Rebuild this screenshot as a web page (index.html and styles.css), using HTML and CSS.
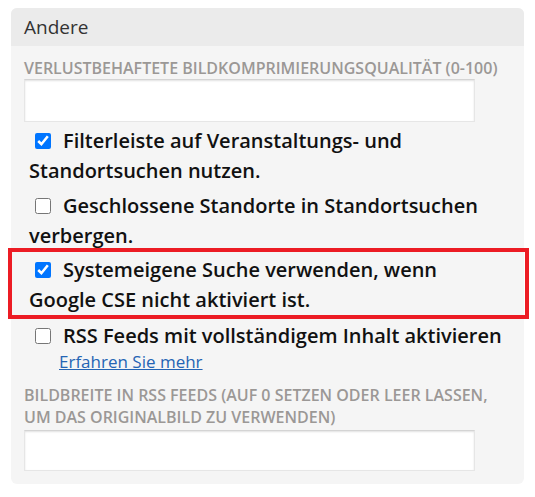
FILE: index.html
```html
<!DOCTYPE html>
<html lang="de">
<head>
<meta charset="utf-8">
<link rel="stylesheet" href="styles.css">
</head>
<body>
<div class="panel">
  <div class="panel-head">Andere</div>
  <div class="panel-body">
    <label class="field-label">Verlustbehaftete Bildkomprimierungsqualität (0-100)</label>
    <input class="text-input" type="text">
    <div class="check-row"><input type="checkbox" class="cb" checked><span>Filterleiste auf Veranstaltungs- und Standortsuchen nutzen.</span></div>
    <div class="check-row"><input type="checkbox" class="cb"><span>Geschlossene Standorte in Standortsuchen verbergen.</span></div>
    <div class="check-row highlighted"><input type="checkbox" class="cb" checked><span>Systemeigene Suche verwenden, wenn Google CSE nicht aktiviert ist.</span></div>
    <div class="check-row tight"><input type="checkbox" class="cb"><span>RSS Feeds mit vollständigem Inhalt aktivieren</span></div>
    <a class="learn" href="#">Erfahren Sie mehr</a>
    <label class="field-label second">Bildbreite in RSS Feeds (auf 0 setzen oder leer lassen, um das Originalbild zu verwenden)</label>
    <input class="text-input last" type="text">
  </div>
</div>
</body>
</html>
```
FILE: styles.css
```css
body {
  margin: 0;
  background: #ffffff;
  font-family: "Open Sans", "Noto Sans", sans-serif;
}
.panel {
  margin: 8px 0 0 11px;
  width: 513px;
  background: #f5f5f5;
  border-radius: 6px;
}
.panel-head {
  height: 38px;
  line-height: 38px;
  background: #ebebeb;
  border-radius: 6px 6px 0 0;
  padding-left: 13px;
  font-size: 19px;
  color: #333333;
}
.panel-body {
  padding: 11px 13px 13px 13px;
  display: flex;
  flex-direction: column;
  align-items: flex-start;
}
.field-label {
  display: block;
  font-size: 16px;
  line-height: 22px;
  font-weight: 600;
  color: #9b9896;
  text-transform: uppercase;
  width: 480px;
}
.field-label.second {
  margin-top: 11px;
}
.text-input {
  box-sizing: border-box;
  width: 451px;
  height: 43px;
  margin: 0;
  border: 1px solid #e6e6e6;
  border-top: 1px solid #d4d4d4;
  background: #ffffff;
  box-shadow: inset 0 1px 2px rgba(0,0,0,0.12);
  outline: none;
}
.text-input.last {
  height: 41px;
  margin-top: 2px;
}
.check-row {
  box-sizing: border-box;
  width: 100%;
  padding-left: 5px;
  padding-right: 6px;
  font-size: 20px;
  font-weight: 600;
  line-height: 30px;
  color: #111111;
  margin-top: 5px;
  position: relative;
}
.check-row:first-of-type {
  margin-top: 4px;
}
.cb {
  width: 16px;
  height: 16px;
  margin: 0 12px 0 6px;
  vertical-align: -1px;
}
.highlighted {
  margin-top: 4px;
}
.highlighted::after {
  content: "";
  position: absolute;
  top: -7px;
  left: -16px;
  right: -18px;
  bottom: -4px;
  border: 4px solid #ec1c24;
  pointer-events: none;
}
.tight {
  margin-top: 6px;
}
.learn {
  margin-left: 35px;
  font-size: 17px;
  line-height: 22px;
  color: #2464b4;
}
```
